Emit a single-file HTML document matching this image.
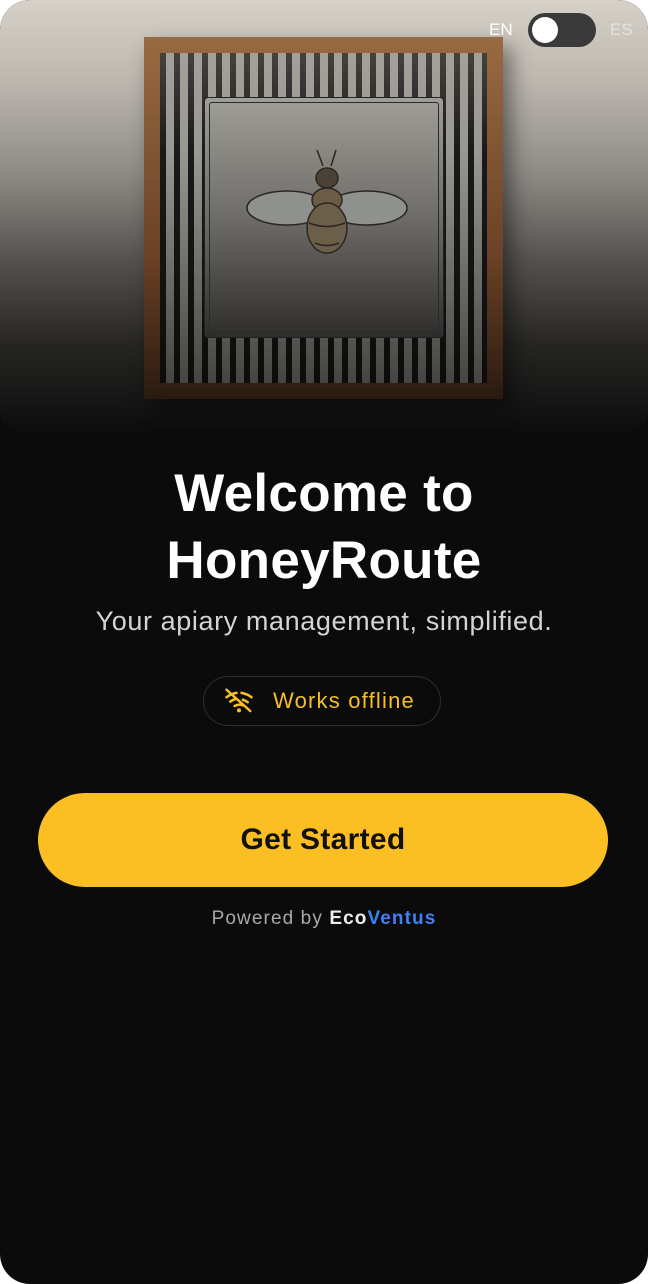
<!DOCTYPE html>
<html><head><meta charset="utf-8"><style>
html,body{margin:0;padding:0;background:#fff;}
body{width:648px;height:1284px;overflow:hidden;font-family:"Liberation Sans",sans-serif;}
.page{position:absolute;left:0;top:0;width:648px;height:1284px;background:#0b0b0b;border-radius:30px;overflow:hidden;}
.hero{position:absolute;left:0;top:0;width:648px;height:432px;border-radius:30px 30px 22px 22px;overflow:hidden;
background:linear-gradient(180deg,#d6d1c8 0%,#bdb8b0 18%,#8e8b86 40%,#55534f 60%,#262523 80%,#0d0d0d 100%);}
.frame{position:absolute;left:144px;top:37px;width:359px;height:362px;background:linear-gradient(180deg,#9a6a42,#6b4226 60%,#2a1a10);box-shadow:8px 10px 20px rgba(0,0,0,.45);}
.mat{position:absolute;left:16px;top:16px;right:16px;bottom:16px;
background:repeating-linear-gradient(90deg,#1a1a1a 0 6px,#9a9892 6px 14px);}
.shade{position:absolute;left:16px;top:16px;right:16px;bottom:16px;background:linear-gradient(180deg,rgba(190,185,175,.25) 0%,rgba(0,0,0,0) 30%,rgba(0,0,0,.55) 100%);}
.panel{position:absolute;left:60px;top:60px;width:238px;height:239px;background:linear-gradient(180deg,#a09e98,#6e6c68 50%,#2e2d2b);border-radius:4px;border:1.5px solid #222;}
.panel:after{content:"";position:absolute;left:4px;top:4px;right:4px;bottom:4px;border:1.5px solid #2a2a2a;border-radius:3px;}
.toggle{position:absolute;left:528px;top:13px;width:68px;height:34px;background:#3a3a3a;border-radius:17px;}
.toggle:after{content:"";position:absolute;left:4px;top:4px;width:26px;height:26px;background:#fff;border-radius:50%;}
.lang{position:absolute;top:20px;font-size:17px;color:#fff;}
h1{position:absolute;left:0;width:648px;top:460px;margin:0;text-align:center;color:#fff;font-size:53px;font-weight:bold;line-height:67px;letter-spacing:0.3px;}
.sub{position:absolute;left:0;width:648px;top:606px;text-align:center;color:#d4d4d4;font-size:27px;letter-spacing:0.6px;}
.pill{position:absolute;left:203px;top:676px;width:238px;height:50px;border:1.5px solid #2e2e2e;border-radius:26px;box-sizing:border-box;}
.pill span{position:absolute;left:69px;top:11px;color:#f7bf25;font-size:22px;letter-spacing:1.2px;}
.btn{position:absolute;left:38px;top:793px;width:570px;height:94px;background:#fbbf24;border-radius:47px;text-align:center;line-height:94px;font-size:30px;font-weight:bold;color:#111;letter-spacing:0.3px;}
.pow{position:absolute;left:0;width:648px;top:908px;text-align:center;font-size:19px;color:#a8a8a8;letter-spacing:1.1px;}
</style></head><body>
<div class="page">
 <div class="hero">
  <div class="frame"><div class="mat"></div><div class="shade"></div>
   <div class="panel">
    <svg width="238" height="239" viewBox="0 0 238 239" style="position:absolute;left:0;top:0">
     <g stroke="#2a2620" stroke-width="1.5" fill="none">
      <path d="M118 68 L112 52 M126 68 L131 52"/>
      <ellipse cx="82" cy="110" rx="40" ry="17" fill="#8f918f"/>
      <ellipse cx="162" cy="110" rx="40" ry="17" fill="#8f918f"/>
      <ellipse cx="122" cy="80" rx="11" ry="10" fill="#4a4236"/>
      <ellipse cx="122" cy="102" rx="15" ry="12" fill="#6b5d45"/>
      <ellipse cx="122" cy="130" rx="20" ry="25" fill="#6b5f4a"/>
      <path d="M104 125 Q122 132 140 125 M110 145 Q122 150 134 145"/>
     </g>
    </svg>
   </div>
  </div>
  <div class="lang" style="left:489px">EN</div>
  <div class="toggle"></div>
  <div class="lang" style="left:610px;color:#e4e2de">ES</div>
 </div>
 <h1>Welcome to<br>HoneyRoute</h1>
 <div class="sub">Your apiary management, simplified.</div>
 <div class="pill">
  <svg width="30" height="30" viewBox="0 0 24 24" style="position:absolute;left:20px;top:9px" fill="none" stroke="#f7bf25" stroke-width="2" stroke-linecap="round">
   <path d="M2 3 L21 20"/><path d="M2 9 Q6 6 10 5.5"/><path d="M14 5.5 Q19 6.5 22 9"/><path d="M5 12.5 Q7 11 9 10.5"/><path d="M15 11 Q17 11.5 19 13"/><path d="M8.5 16 Q12 14 15 15.5"/><circle cx="12" cy="19.5" r=".6" fill="#f7bf25"/>
  </svg>
  <span>Works offline</span>
 </div>
 <div class="btn">Get Started</div>
 <div class="pow">Powered by <b style="color:#eee">Eco</b><b style="color:#3b82f6">Ventus</b></div>
</div>
</body></html>
